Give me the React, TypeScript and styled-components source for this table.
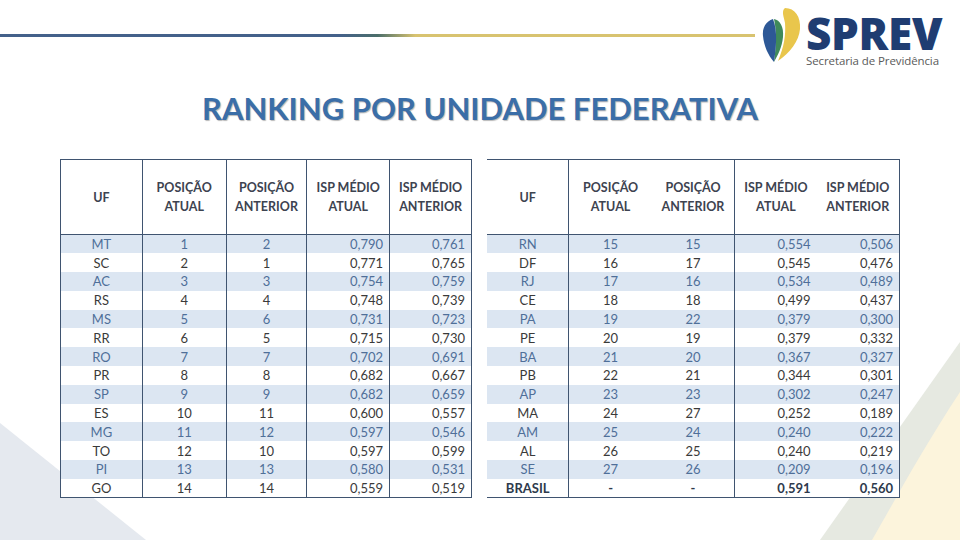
import React from 'react';
import styled, { createGlobalStyle } from 'styled-components'

const GlobalStyle = createGlobalStyle`
  html, body {
    margin: 0;
    padding: 0;
    background: #ffffff;
  }
`

const Page = styled.main`
  position: relative;
  width: 960px;
  height: 540px;
  overflow: hidden;
  background: #ffffff;
  font-family: Lato, "Open Sans", sans-serif;
`
const Backdrop = styled.svg`
  position: absolute;
  left: 0;
  top: 0;
  z-index: 0;
`
const Content = styled.div`
  position: relative;
  z-index: 1;
  display: flex;
  flex-direction: column;
`
const TopBar = styled.header`
  height: 80px;
  display: flex;
  align-items: flex-start;
`
const Rule = styled.div`
  width: 755px;
  height: 3px;
  margin-top: 34px;
  background: linear-gradient(to right, #44618a 0%, #44618a 45%, #4b6e6a 50%, #d8c370 55%, #d8c370 100%);
`
const Logo = styled.div`
  display: flex;
  align-items: flex-start;
  margin-left: 7px;
  padding-top: 6px;
  gap: 4px;
`
const LogoText = styled.div`
  display: flex;
  flex-direction: column;
  padding-top: 9px;
`
const Brand = styled.span`
  display: block;
  height: 36px;
  font-family: "Open Sans", sans-serif;
  font-weight: 800;
  font-size: 44px;
  line-height: 36px;
  letter-spacing: -0.3px;
  color: #1f3d72;
`
const Tagline = styled.span`
  display: block;
  font-family: "Open Sans", sans-serif;
  font-size: 11.5px;
  line-height: 14px;
  margin-top: 3px;
  letter-spacing: -0.1px;
  color: #5a5a5a;
`
const Title = styled.h1`
  margin: 6px 0 0;
  height: 44px;
  line-height: 44px;
  text-align: center;
  font-family: Lato, sans-serif;
  font-weight: 700;
  font-size: 31px;
  color: #3b6ea8;
  text-shadow: 1px 1px 1px #b8b8b8;
`
const Tables = styled.section`
  display: flex;
  gap: 15px;
  margin-top: 29px;
  padding-left: 60px;
`
const Table = styled.table<{ $open?: boolean; $width: number }>`
  width: ${p => p.$width}px;
  border-collapse: collapse;
  table-layout: fixed;
  border: 1px solid #3f5470;
  border-left: ${p => (p.$open ? 'none' : '1px solid #3f5470')};
  background: #ffffff;
`
const HeadCell = styled.th<{ $w: number; $divider: boolean }>`
  width: ${p => p.$w}%;
  height: 74px;
  padding: 0;
  border-right: ${p => (p.$divider ? '1px solid #3f5470' : 'none')};
  border-bottom: 1px solid #3f5470;
  font-weight: 700;
  font-size: 12.5px;
  line-height: 19px;
  color: #3d4350;
  text-align: center;
  vertical-align: middle;
`
const Row = styled.tr<{ $shade: boolean }>`
  height: 18.8px;
  background: ${p => (p.$shade ? '#dce6f2' : '#ffffff')};
  color: ${p => (p.$shade ? '#4f6f99' : '#3a3a3a')};
`
const Cell = styled.td<{ $right: boolean; $divider: boolean; $bold: boolean }>`
  padding: 0 ${p => (p.$right ? '6px' : '0')} 0 0;
  border-right: ${p => (p.$divider ? '1px solid #3f5470' : 'none')};
  text-align: ${p => (p.$right ? 'right' : 'center')};
  font-size: 13px;
  line-height: 18px;
  font-weight: ${p => (p.$bold ? 700 : 400)};
  color: ${p => (p.$bold ? '#2e3a4c' : 'inherit')};
`

const heads = [
  ['UF'],
  ['POSIÇÃO', 'ATUAL'],
  ['POSIÇÃO', 'ANTERIOR'],
  ['ISP MÉDIO', 'ATUAL'],
  ['ISP MÉDIO', 'ANTERIOR'],
]

const left = [
  ['MT', '1', '2', '0,790', '0,761'],
  ['SC', '2', '1', '0,771', '0,765'],
  ['AC', '3', '3', '0,754', '0,759'],
  ['RS', '4', '4', '0,748', '0,739'],
  ['MS', '5', '6', '0,731', '0,723'],
  ['RR', '6', '5', '0,715', '0,730'],
  ['RO', '7', '7', '0,702', '0,691'],
  ['PR', '8', '8', '0,682', '0,667'],
  ['SP', '9', '9', '0,682', '0,659'],
  ['ES', '10', '11', '0,600', '0,557'],
  ['MG', '11', '12', '0,597', '0,546'],
  ['TO', '12', '10', '0,597', '0,599'],
  ['PI', '13', '13', '0,580', '0,531'],
  ['GO', '14', '14', '0,559', '0,519'],
]

const right = [
  ['RN', '15', '15', '0,554', '0,506'],
  ['DF', '16', '17', '0,545', '0,476'],
  ['RJ', '17', '16', '0,534', '0,489'],
  ['CE', '18', '18', '0,499', '0,437'],
  ['PA', '19', '22', '0,379', '0,300'],
  ['PE', '20', '19', '0,379', '0,332'],
  ['BA', '21', '20', '0,367', '0,327'],
  ['PB', '22', '21', '0,344', '0,301'],
  ['AP', '23', '23', '0,302', '0,247'],
  ['MA', '24', '27', '0,252', '0,189'],
  ['AM', '25', '24', '0,240', '0,222'],
  ['AL', '26', '25', '0,240', '0,219'],
  ['SE', '27', '26', '0,209', '0,196'],
  ['BRASIL', '-', '-', '0,591', '0,560'],
]

type TableProps = {
  rows: string[][]
  width: number
  widths: number[]
  dividers: boolean[]
  open?: boolean
  boldLast?: boolean
}

const Ranking = ({ rows, width, widths, dividers, open, boldLast }: TableProps) => (
  <Table $open={open} $width={width}>
    <thead>
      <tr>
        {heads.map((h, i) => (
          <HeadCell key={i} $w={widths[i]} $divider={dividers[i]}>
            {h.map((line, j) => <div key={j}>{line}</div>)}
          </HeadCell>
        ))}
      </tr>
    </thead>
    <tbody>
      {rows.map((r, i) => (
        <Row key={r[0]} $shade={i % 2 === 0}>
          {r.map((v, j) => (
            <Cell
              key={j}
              $right={j >= 3}
              $divider={dividers[j]}
              $bold={!!boldLast && i === rows.length - 1}
            >
              {v}
            </Cell>
          ))}
        </Row>
      ))}
    </tbody>
  </Table>
)

const Mark = () => (
  <svg width="40" height="58" viewBox="0 0 40 56">
    <path d="M23 1 C33 1 39 10 38 22 C37 34 28 46 16 54 C22 40 24 28 23 16 C22 10 19 4 23 1 Z" fill="#e9c64c" />
    <path d="M12 12 C18 13 22 20 21 30 C20 40 16 48 12 55 C14 40 15 26 12 12 Z" fill="#3f8a5a" />
    <path d="M11 12 C4 14 0 21 1 29 C2 39 6 48 12 55 C14 42 16 24 11 12 Z" fill="#2d5896" />
  </svg>
)

const App = () => {
  return (
    <Page>
      <GlobalStyle />
      <Backdrop width="960" height="540" viewBox="0 0 960 540">
        <polygon points="0,423 146,540 0,540" fill="#e5e9ef" />
        <polygon points="960,342 960,540 820,540" fill="#e6e9e1" />
        <path d="M960 392 L960 540 L872 540 C895 500 925 445 960 392 Z" fill="#fcf4dc" />
      </Backdrop>
      <Content>
        <TopBar>
          <Rule />
          <Logo>
            <Mark />
            <LogoText>
              <Brand>SPREV</Brand>
              <Tagline>Secretaria de Previdência</Tagline>
            </LogoText>
          </Logo>
        </TopBar>
        <Title>RANKING POR UNIDADE FEDERATIVA</Title>
        <Tables>
          <Ranking
            rows={left}
            width={412}
            widths={[19.9, 20.4, 19.65, 20.15, 19.9]}
            dividers={[true, true, true, true, false]}
          />
          <Ranking
            rows={right}
            width={413}
            widths={[19.85, 20.1, 20.1, 19.85, 20.1]}
            dividers={[true, false, true, false, false]}
            open
            boldLast
          />
        </Tables>
      </Content>
    </Page>
  );
}

export default App;
